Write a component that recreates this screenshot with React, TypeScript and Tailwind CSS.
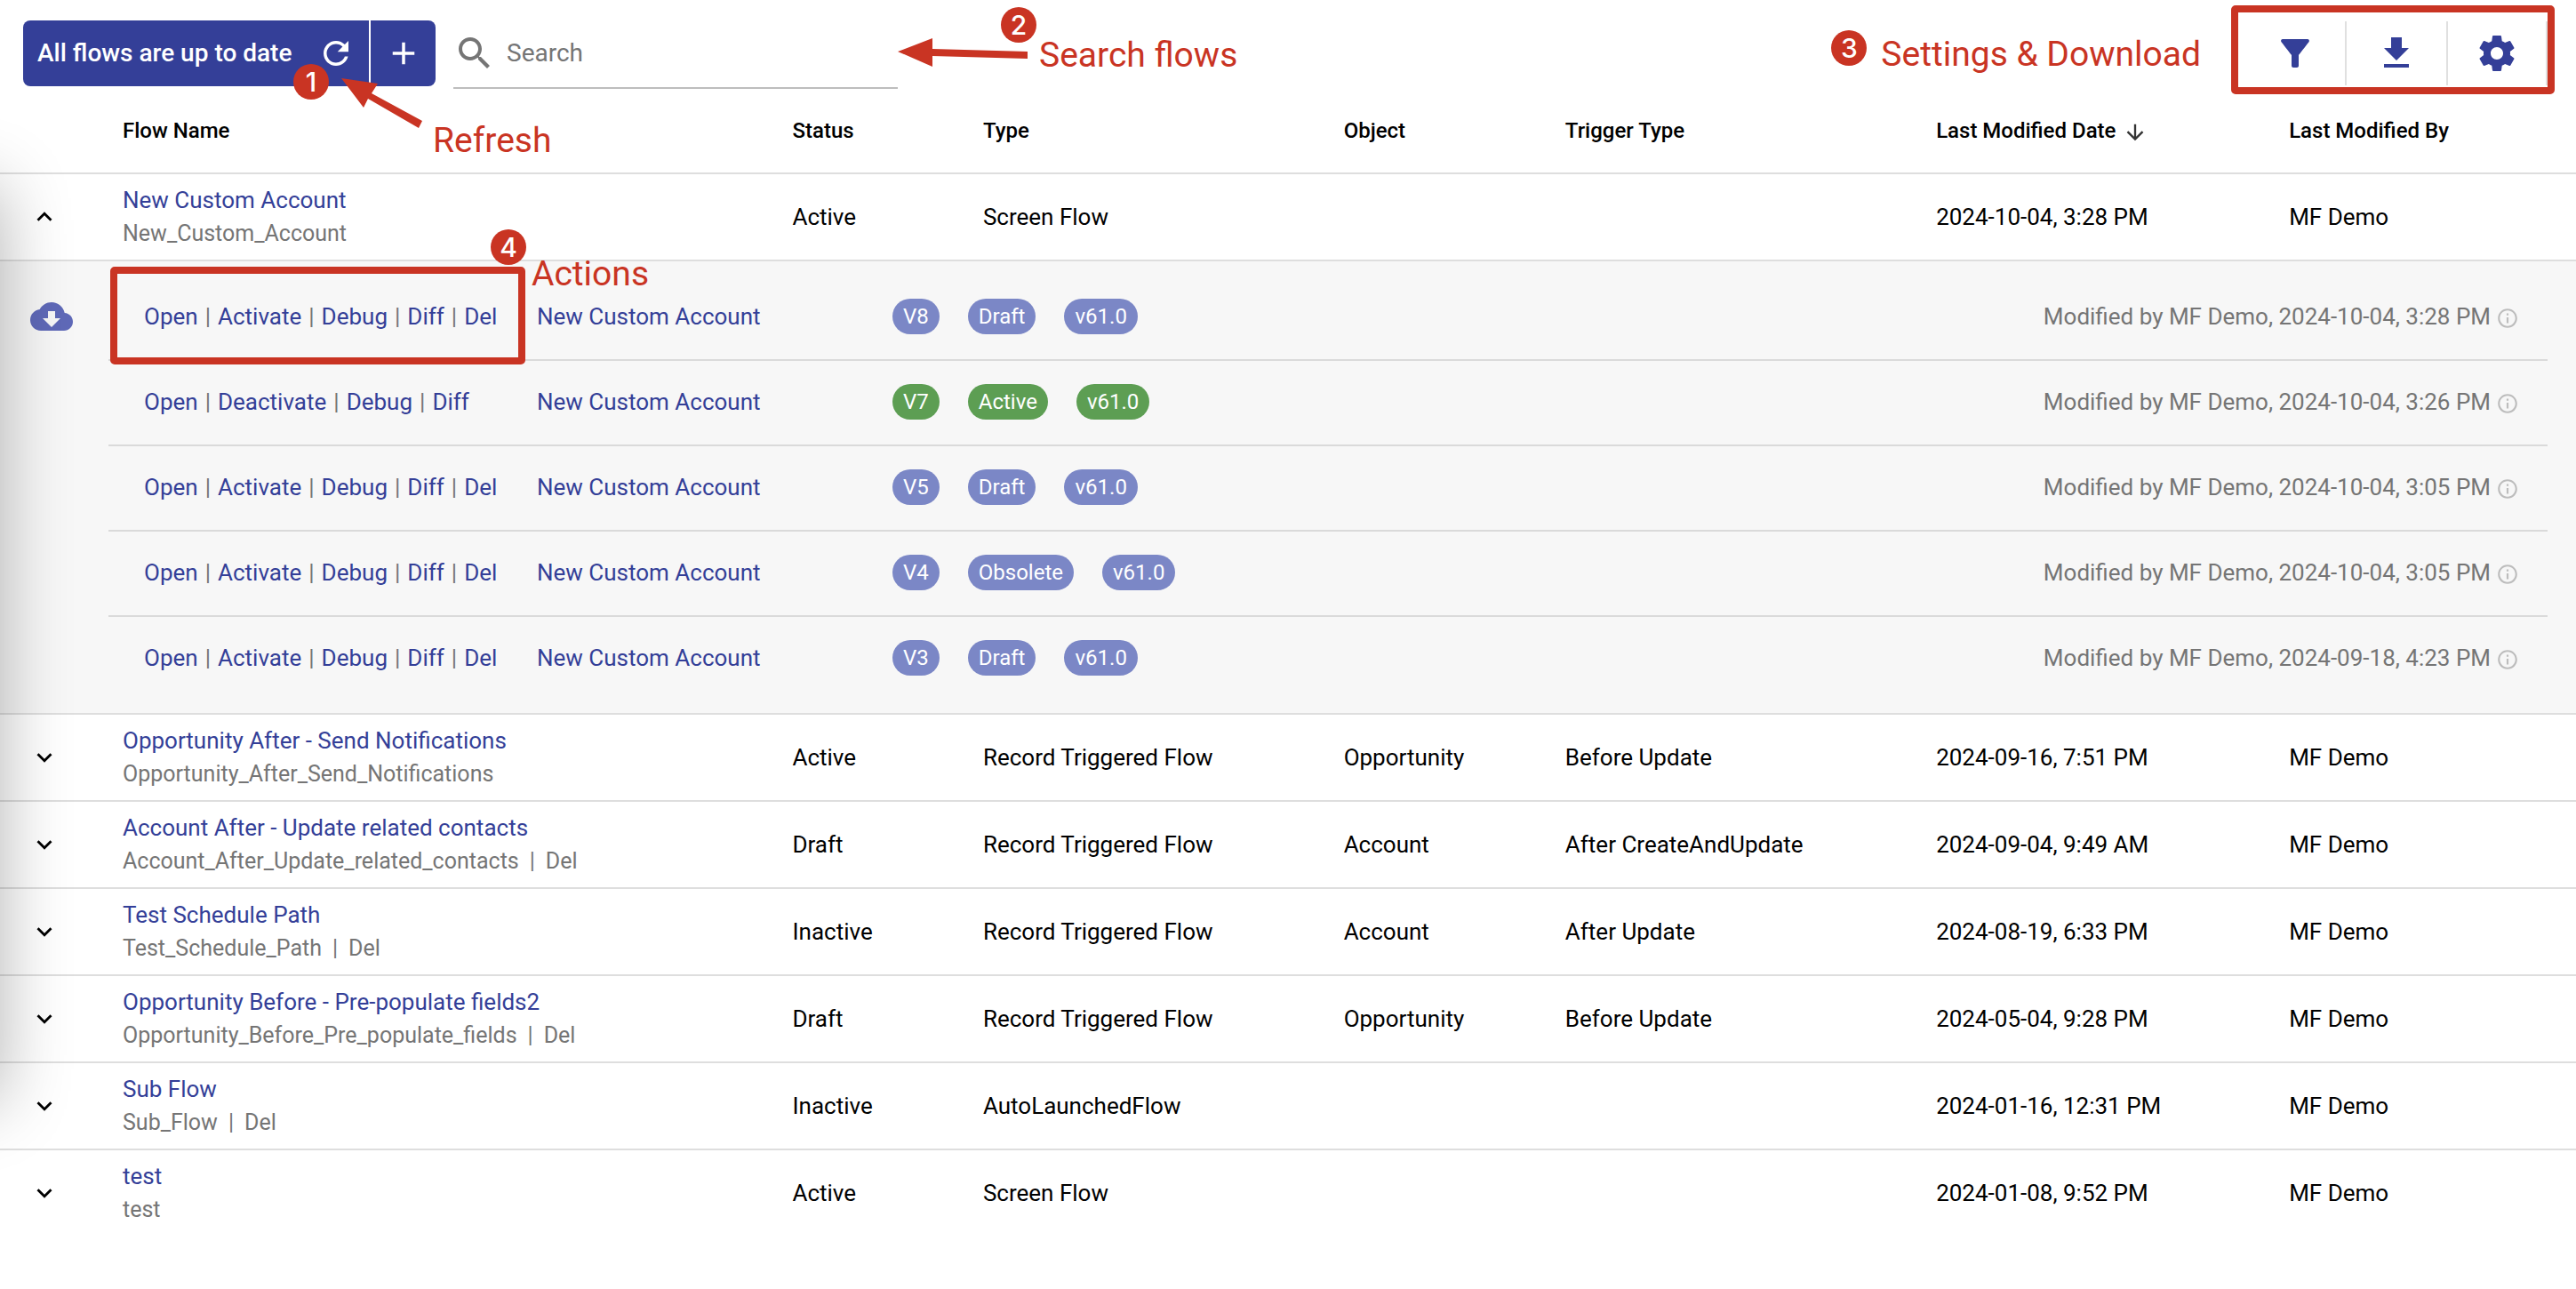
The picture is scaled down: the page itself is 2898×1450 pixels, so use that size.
import type { ReactNode } from "react";

const ICONS = {
  refresh:
    "M17.65 6.35C16.2 4.9 14.21 4 12 4c-4.42 0-7.99 3.58-7.99 8s3.57 8 7.99 8c3.73 0 6.84-2.55 7.73-6h-2.08c-.82 2.33-3.04 4-5.65 4-3.31 0-6-2.69-6-6s2.69-6 6-6c1.66 0 3.14.69 4.22 1.78L13 11h7V4l-2.35 2.35z",
  plus: "M19 13h-6v6h-2v-6H5v-2h6V5h2v6h6v2z",
  search:
    "M15.5 14h-.79l-.28-.27C15.41 12.59 16 11.11 16 9.5 16 5.91 13.09 3 9.5 3S3 5.91 3 9.5 5.91 16 9.5 16c1.61 0 3.09-.59 4.23-1.57l.27.28v.79l5 4.99L20.49 19l-4.99-5zm-6 0C7.01 14 5 11.99 5 9.5S7.01 5 9.5 5 14 7.01 14 9.5 11.99 14 9.5 14z",
  filter:
    "M4.25 5.61C6.27 8.2 10 13 10 13v6c0 .55.45 1 1 1h2c.55 0 1-.45 1-1v-6s3.72-4.8 5.74-7.39c.51-.66.04-1.61-.79-1.61H5.04c-.83 0-1.3.95-.79 1.61z",
  download: "M19 9h-4V3H9v6H5l7 7 7-7zM5 18v2h14v-2H5z",
  settings:
    "M19.43 12.98c.04-.32.07-.64.07-.98s-.03-.66-.07-.98l2.11-1.65c.19-.15.24-.42.12-.64l-2-3.46c-.12-.22-.39-.3-.61-.22l-2.49 1c-.52-.4-1.08-.73-1.69-.98l-.38-2.65C14.46 2.18 14.25 2 14 2h-4c-.25 0-.46.18-.49.42l-.38 2.65c-.61.25-1.17.59-1.69.98l-2.49-1c-.23-.09-.49 0-.61.22l-2 3.46c-.13.22-.07.49.12.64l2.11 1.65c-.04.32-.07.65-.07.98s.03.66.07.98l-2.11 1.65c-.19.15-.24.42-.12.64l2 3.46c.12.22.39.3.61.22l2.49-1c.52.4 1.08.73 1.69.98l.38 2.65c.03.24.24.42.49.42h4c.25 0 .46-.18.49-.42l.38-2.65c.61-.25 1.17-.59 1.69-.98l2.49 1c.23.09.49 0 .61-.22l2-3.46c.12-.22.07-.49-.12-.64l-2.11-1.65zM12 15.5c-1.93 0-3.5-1.57-3.5-3.5s1.57-3.5 3.5-3.5 3.5 1.57 3.5 3.5-1.57 3.5-3.5 3.5z",
  up: "M12 8l-6 6 1.41 1.41L12 10.83l4.59 4.58L18 14z",
  down: "M16.59 8.59L12 13.17 7.41 8.59 6 10l6 6 6-6z",
  sort: "M20 12l-1.41-1.41L13 16.17V4h-2v12.17l-5.58-5.59L4 12l8 8 8-8z",
  cloud:
    "M19.35 10.04C18.67 6.59 15.64 4 12 4 9.11 4 6.6 5.64 5.35 8.04 2.34 8.36 0 10.91 0 14c0 3.31 2.69 6 6 6h13c2.76 0 5-2.24 5-5 0-2.64-2.05-4.78-4.65-4.96zM17 13l-5 5-5-5h3V9h4v4h3z",
  info: "M11 7h2v2h-2zm0 4h2v6h-2zm1-9C6.48 2 2 6.48 2 12s4.48 10 10 10 10-4.48 10-10S17.52 2 12 2zm0 18c-4.41 0-8-3.59-8-8s3.59-8 8-8 8 3.59 8 8-3.59 8-8 8z",
};

function Icon({ name, className }: { name: keyof typeof ICONS; className: string }) {
  return (
    <svg viewBox="0 0 24 24" aria-hidden="true" className={`shrink-0 fill-current ${className}`}>
      <path d={ICONS[name]} />
    </svg>
  );
}

type Flow = {
  name: string;
  api: string;
  del?: boolean;
  status: string;
  type: string;
  object?: string;
  trigger?: string;
  date: string;
};

const FLOWS: Flow[] = [
  { name: "New Custom Account", api: "New_Custom_Account", status: "Active", type: "Screen Flow", date: "2024-10-04, 3:28 PM" },
  { name: "Opportunity After - Send Notifications", api: "Opportunity_After_Send_Notifications", status: "Active", type: "Record Triggered Flow", object: "Opportunity", trigger: "Before Update", date: "2024-09-16, 7:51 PM" },
  { name: "Account After - Update related contacts", api: "Account_After_Update_related_contacts", del: true, status: "Draft", type: "Record Triggered Flow", object: "Account", trigger: "After CreateAndUpdate", date: "2024-09-04, 9:49 AM" },
  { name: "Test Schedule Path", api: "Test_Schedule_Path", del: true, status: "Inactive", type: "Record Triggered Flow", object: "Account", trigger: "After Update", date: "2024-08-19, 6:33 PM" },
  { name: "Opportunity Before - Pre-populate fields2", api: "Opportunity_Before_Pre_populate_fields", del: true, status: "Draft", type: "Record Triggered Flow", object: "Opportunity", trigger: "Before Update", date: "2024-05-04, 9:28 PM" },
  { name: "Sub Flow", api: "Sub_Flow", del: true, status: "Inactive", type: "AutoLaunchedFlow", date: "2024-01-16, 12:31 PM" },
  { name: "test", api: "test", status: "Active", type: "Screen Flow", date: "2024-01-08, 9:52 PM" },
];

const VERSIONS = [
  { v: "V8", status: "Draft", date: "2024-10-04, 3:28 PM" },
  { v: "V7", status: "Active", date: "2024-10-04, 3:26 PM" },
  { v: "V5", status: "Draft", date: "2024-10-04, 3:05 PM" },
  { v: "V4", status: "Obsolete", date: "2024-10-04, 3:05 PM" },
  { v: "V3", status: "Draft", date: "2024-09-18, 4:23 PM" },
];

function Badge({ children, className }: { children: ReactNode; className: string }) {
  return (
    <span
      className={`flex size-10 items-center justify-center rounded-full bg-[#c93423] font-[Inter,sans-serif] text-[30px] leading-none font-medium text-white ${className}`}
    >
      {children}
    </span>
  );
}

function Note({ children, className }: { children: ReactNode; className: string }) {
  return (
    <span className={`text-[39px] leading-[46px] whitespace-nowrap text-[#c93423] ${className}`}>
      {children}
    </span>
  );
}

function Toolbar() {
  return (
    <header className="flex items-center gap-5 pt-5 pr-8 pl-[26px]">
      <div className="relative flex h-[74px] shrink-0 text-white">
        <button className="flex w-[389px] items-center justify-between rounded-l-lg bg-[#343f98] px-4 text-[28px] font-medium">
          All flows are up to date
          <Icon name="refresh" className="size-[42px]" />
        </button>
        <button
          aria-label="New flow"
          className="flex w-[75px] items-center justify-center rounded-r-lg border-l-2 border-white bg-[#343f98]"
        >
          <Icon name="plus" className="size-[42px]" />
        </button>
        <Badge className="absolute top-[49px] left-[304px]">1</Badge>
        <svg viewBox="0 0 100 64" aria-hidden="true" className="absolute top-[61px] left-[354px] h-16 w-[100px] fill-[#c93423]">
          <path d="M4 4L45 10L38 21L95 52L91 60L34 27L29 37Z" />
        </svg>
        <Note className="absolute top-28 left-[461px]">Refresh</Note>
      </div>

      <div className="relative flex h-20 w-[500px] border-b-2 border-[#bdbdbd]">
        <label className="flex flex-1 items-center gap-3 pt-0.5 text-[#757575]">
          <Icon name="search" className="size-12" />
          <input
            type="search"
            aria-label="Search"
            placeholder="Search"
            className="min-w-0 flex-1 bg-transparent text-[28px] outline-none placeholder:text-[#757575]"
          />
        </label>
        <svg viewBox="0 0 150 38" aria-hidden="true" className="absolute top-5 left-[500px] h-[38px] w-[150px] fill-[#c93423]">
          <path d="M0 18L39 3V15L146 18V26L39 23V35Z" />
        </svg>
        <Badge className="absolute -top-3 left-[616px]">2</Badge>
        <Note className="absolute top-[19px] left-[659px]">Search flows</Note>
      </div>

      <div className="relative ml-auto flex h-[72px] divide-x-2 divide-[#e0e0e0] text-[#343f98]">
        <button aria-label="Filter" className="flex w-[114px] items-center justify-center">
          <Icon name="filter" className="size-12" />
        </button>
        <button aria-label="Download" className="flex w-[114px] items-center justify-center">
          <Icon name="download" className="size-12" />
        </button>
        <button aria-label="Settings" className="flex w-28 items-center justify-center">
          <Icon name="settings" className="size-12" />
        </button>
        <span className="pointer-events-none absolute -top-[18px] -right-2 -bottom-2.5 -left-4 rounded-[5px] border-8 border-[#c93423]" />
        <div className="absolute top-2.5 right-full mr-[50px] flex gap-4">
          <Badge className="shrink-0">3</Badge>
          <Note className="mt-1">Settings &amp; Download</Note>
        </div>
      </div>
    </header>
  );
}

function Actions({ active }: { active: boolean }) {
  const items = active
    ? ["Open", "Deactivate", "Debug", "Diff"]
    : ["Open", "Activate", "Debug", "Diff", "Del"];
  return (
    <div className="flex w-[482px] shrink-0 gap-2 pl-10 text-[#757575]">
      {items.map((label, i) => (
        <span key={label} className="flex gap-2">
          {i > 0 && <span>|</span>}
          <button className="text-[#343f98]">{label}</button>
        </span>
      ))}
    </div>
  );
}

function Chip({ children, active }: { children: ReactNode; active: boolean }) {
  return (
    <span
      className={`flex h-10 items-center rounded-full px-3 text-2xl text-white ${active ? "bg-[#5d9e53]" : "bg-[#7b87c6]"}`}
    >
      {children}
    </span>
  );
}

function Versions() {
  return (
    <div className="flex pt-4 pr-8 pb-3">
      <div className="flex w-[122px] shrink-0 justify-start pt-[22px] pl-[34px]">
        <button aria-label="Download flow" className="h-12 text-[#5f69b8]">
          <Icon name="cloud" className="size-12" />
        </button>
      </div>
      <ul className="flex-1">
        {VERSIONS.map(({ v, status, date }, i) => {
          const active = status === "Active";
          return (
            <li
              key={v}
              className="relative flex h-24 items-center border-b-2 border-[#dadada] pb-0.5 last:border-b-0 last:pb-1"
            >
              <Actions active={active} />
              <a href="#version" className="w-[400px] shrink-0 text-[#343f98]">
                New Custom Account
              </a>
              <div className="flex gap-8">
                <Chip active={active}>{v}</Chip>
                <Chip active={active}>{status}</Chip>
                <Chip active={active}>v61.0</Chip>
              </div>
              <p className="ml-auto flex items-center gap-1.5 pr-8 text-[#757575]">
                Modified by MF Demo, {date}
                <Icon name="info" className="mt-1 size-[26px] text-[#bdbdbd]" />
              </p>
              {i === 0 && (
                <>
                  <span className="pointer-events-none absolute -top-2.5 -bottom-1.5 left-0.5 w-[467px] rounded-[5px] border-8 border-[#c93423]" />
                  <Badge className="absolute -top-[52px] left-[430px]">4</Badge>
                  <Note className="absolute -top-[25px] left-[476px]">Actions</Note>
                </>
              )}
            </li>
          );
        })}
      </ul>
    </div>
  );
}

function FlowRow({ flow, open }: { flow: Flow; open: boolean }) {
  return (
    <tr className="h-[98px] *:border-b-2 *:border-[#dedede] *:p-0 last:*:border-b-0 last:*:pb-0.5">
      <td>
        <button aria-label={open ? "Collapse" : "Expand"} className="ml-[33px] flex">
          <Icon name={open ? "up" : "down"} className="size-[34px]" />
        </button>
      </td>
      <td className="leading-[37px] whitespace-nowrap">
        <a href="#flow" className="block text-[#343f98]">
          {flow.name}
        </a>
        <div className="flex gap-3 text-[25px] text-[#757575]">
          {flow.api}
          {flow.del && (
            <>
              <span>|</span>
              <button>Del</button>
            </>
          )}
        </div>
      </td>
      <td>{flow.status}</td>
      <td>{flow.type}</td>
      <td>{flow.object}</td>
      <td>{flow.trigger}</td>
      <td>{flow.date}</td>
      <td>MF Demo</td>
    </tr>
  );
}

export default function App() {
  return (
    <div className="relative min-h-screen overflow-hidden bg-white font-[Roboto,sans-serif] text-[26px] leading-[38px] text-black">
      <Toolbar />
      <table className="w-full table-fixed border-separate border-spacing-0 text-left">
        <colgroup>
          <col className="w-[138px]" />
          <col className="w-[26%]" />
          <col className="w-[7.4%]" />
          <col className="w-[14%]" />
          <col className="w-[8.6%]" />
          <col className="w-[14.4%]" />
          <col className="w-[13.7%]" />
          <col />
        </colgroup>
        <thead>
          <tr className="h-24 text-2xl *:border-b-2 *:border-[#dedede] *:p-0 *:font-medium">
            <td />
            <th scope="col">Flow Name</th>
            <th scope="col">Status</th>
            <th scope="col">Type</th>
            <th scope="col">Object</th>
            <th scope="col">Trigger Type</th>
            <th scope="col">
              <button className="flex items-center gap-2">
                Last Modified Date
                <Icon name="sort" className="mt-1 size-7 text-[#333333]" />
              </button>
            </th>
            <th scope="col">Last Modified By</th>
          </tr>
        </thead>
        <tbody>
          <FlowRow flow={FLOWS[0]} open />
          <tr>
            <td colSpan={8} className="border-b-2 border-[#dedede] bg-[#f7f7f7] p-0">
              <Versions />
            </td>
          </tr>
          {FLOWS.slice(1).map((flow) => (
            <FlowRow key={flow.name} flow={flow} open={false} />
          ))}
        </tbody>
      </table>
      <div className="pointer-events-none absolute top-[210px] -left-[200px] h-[1030px] w-[200px] shadow-[0_0_80px_0_rgba(0,0,0,0.3)]" />
    </div>
  );
}
